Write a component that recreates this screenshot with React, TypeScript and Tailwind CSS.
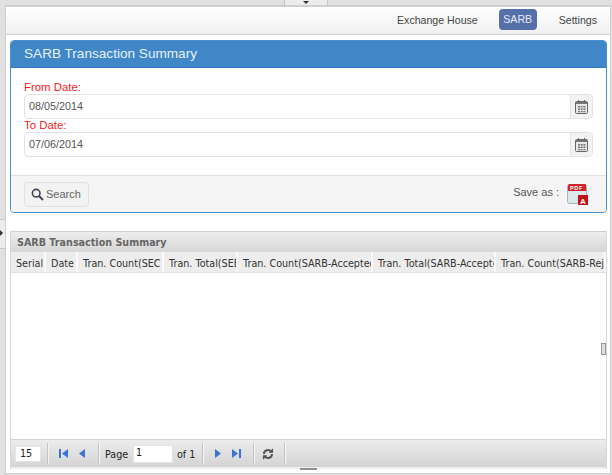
const font = "font-['Liberation_Sans',Arial,sans-serif]";
const verdana = "font-['DejaVu_Sans',Verdana,sans-serif]";

const columns = [
  { label: "Serial", width: "w-[35px]" },
  { label: "Date", width: "w-[32px]" },
  { label: "Tran. Count(SEC", width: "w-[86px]" },
  { label: "Tran. Total(SEB", width: "w-[74px]" },
  { label: "Tran. Count(SARB-Accepted", width: "w-[135px]" },
  { label: "Tran. Total(SARB-Accepted", width: "w-[123px]" },
  { label: "Tran. Count(SARB-Rejected", width: "w-[110px]" },
];

function CalendarIcon() {
  return (
    <svg width="13" height="14" viewBox="0 0 13 14">
      <rect x="0.5" y="1.5" width="12" height="12" rx="1" fill="#e8e8e8" stroke="#666" />
      <rect x="1" y="2" width="11" height="2" fill="#777" />
      <path d="M3.5 0v3M9.5 0v3" stroke="#666" />
      <path d="M3 6h2v1.5H3zM5.7 6h2v1.5h-2zM8.4 6h2v1.5h-2zM3 8.5h2V10H3zM5.7 8.5h2V10h-2zM8.4 8.5h2V10h-2zM3 11h2v1.3H3zM5.7 11h2v1.3h-2zM8.4 11h2v1.3h-2z" fill="#777" />
    </svg>
  );
}

function DateField({ label, value }: { label: string; value: string }) {
  return (
    <div>
      <div className="h-[13px] text-[11.4px] leading-[13px] text-[#f01c24]">{label}</div>
      <div className="flex h-[25px] w-[569px] rounded-[4px] border border-[#e2e2e2] bg-white">
        <div className="flex-1 pl-[4px] text-[10.8px] leading-[23px] text-[#555]">{value}</div>
        <div className="flex w-[22px] items-center justify-center rounded-r-[4px] border-l border-[#e2e2e2] bg-[#f3f3f3]">
          <CalendarIcon />
        </div>
      </div>
    </div>
  );
}

function PdfIcon() {
  return (
    <svg width="21" height="22" viewBox="0 0 21 22">
      <rect x="0.5" y="1.5" width="19" height="19" rx="2" fill="#dbe8ea" stroke="#a9b5b8" />
      <path d="M1 3a2 2 0 0 1 2-2h15a1 1 0 0 1 1 1v6H1z" fill="#d2232a" />
      <text x="9.5" y="6.5" textAnchor="middle" fontSize="5.5" fontWeight="700" fill="#fff" fontFamily="'Liberation Sans', sans-serif" letterSpacing="0.6">PDF</text>
      <rect x="11" y="12" width="10" height="10" fill="#c40f16" />
      <text x="16" y="20.5" textAnchor="middle" fontSize="8" fontWeight="700" fill="#fff" fontFamily="'Liberation Sans', sans-serif">A</text>
    </svg>
  );
}

function PagerSeparator() {
  return <div className="h-[21px] w-[2px] shrink-0 border-l border-r border-l-[#c4c4c4] border-r-[#f4f4f4]" />;
}

function NavIcon({ d }: { d: string }) {
  return (
    <svg width="10" height="11" viewBox="0 0 10 11" className="shrink-0">
      <path d={d} fill="#3b74d6" />
    </svg>
  );
}

export default function App() {
  return (
    <div className={`${font} relative h-[475px] w-[612px] overflow-hidden bg-[#e0e0e0]`}>
      {/* top tab and left splitter handle */}
      <div className="absolute left-[284px] top-0 h-[5px] w-[44px] border-x border-[#c4c4c4] bg-[#ececec]">
        <div className="mx-auto mt-[1px] h-0 w-0 border-x-[3px] border-t-[3px] border-x-transparent border-t-[#333]" />
      </div>
      <div className="absolute left-0 top-[219px] h-[30px] w-[5px] border-y border-[#c8c8c8] bg-[#ececec]">
        <div className="mt-[10px] h-0 w-0 border-y-[3px] border-l-[3px] border-y-transparent border-l-[#333]" />
      </div>

      <div className="ml-[5px] mr-[1px] mt-[5px] h-[469px] border border-t-2 border-[#cfcfcf] bg-white">
        {/* Navbar */}
        <div className="flex h-[28px] items-center justify-end border-b border-[#cfcfcf] bg-gradient-to-b from-white to-[#f0f0f0] pr-[13px] text-[10.6px] text-[#444]">
          <span className="mr-[21px]">Exchange House</span>
          <span className="-mt-[2px] mr-[22px] flex h-[21px] w-[38px] items-center justify-center rounded-[4px] bg-[#5570a8] text-[#e8ecf5]">SARB</span>
          <span>Settings</span>
        </div>

        {/* Summary panel */}
        <div className="ml-[4px] mt-[5px] w-[597px] overflow-hidden rounded-[4px] border border-[#4a90d0]">
          <div className="h-[27px] border-b border-[#2f7bc0] bg-[#3f87c6] pl-[13px] text-[13.6px] leading-[26px] text-[#e6eff8]">
            SARB Transaction Summary
          </div>
          <div className="flex h-[107px] flex-col bg-white pl-[13px] pt-[13px]">
            <DateField label="From Date:" value="08/05/2014" />
            <DateField label="To Date:" value="07/06/2014" />
          </div>
          <div className="flex h-[37px] items-center justify-between border-t border-[#e0e0e0] bg-[#f5f5f5] pl-[13px] pr-[18px]">
            <button className="flex h-[25px] w-[65px] items-center gap-[2px] rounded-[4px] border border-[#e0e0e0] bg-[#f3f3f3] pl-[6px] text-[11px] text-[#666]">
              <svg width="13" height="13" viewBox="0 0 13 13" fill="none" stroke="#445" strokeWidth="1.6">
                <circle cx="5.2" cy="5.2" r="3.8" />
                <path d="M8 8l4 4" strokeWidth="2" />
              </svg>
              Search
            </button>
            <div className="flex items-center gap-[8px] text-[11px] text-[#555]">
              <span className="-mt-[4px]">Save as :</span>
              <PdfIcon />
            </div>
          </div>
        </div>

        {/* Grid */}
        <div className="relative ml-[4px] mt-[18px] h-[238px] w-[597px] border-x border-[#d8d8d8]">
          <div className={`${verdana} flex h-[21px] items-center border-t border-[#d0d0d0] bg-gradient-to-b from-[#ededed] to-[#d6d6d6] pl-[6px] pt-[2px] text-[9.6px] font-bold text-[#666]`}>
            SARB Transaction Summary
          </div>
          <div className={`${verdana} flex h-[21px] overflow-hidden border-b border-[#e2e2e2] bg-[#ededed] text-[9.6px] text-[#333]`}>
            {columns.map((col) => (
              <div key={col.label} className={`${col.width} shrink-0 overflow-hidden whitespace-nowrap border-r-2 border-[#fafafa] pl-[5px] leading-[23px]`}>
                {col.label}
              </div>
            ))}
          </div>
          <div className="h-[166px] bg-white" />
          <div className="absolute right-0 top-[112px] h-[12px] w-[5px] border border-[#999] bg-[#ddd]" />

          {/* Pager */}
          <div className={`${verdana} flex h-[28px] items-center border-t border-[#d4d4d4] bg-gradient-to-b from-[#ececec] to-[#d4d4d4] text-[9.6px] text-[#222]`}>
            <div className="ml-[4px] h-[16px] w-[26px] border border-[#e4e4e4] bg-white pl-[4px] leading-[14px]">15</div>
            <div className="ml-[6px]"><PagerSeparator /></div>
            <div className="ml-[10px] flex items-center gap-[8px]">
              <NavIcon d="M0 1h2v9H0zM9 1v9L3 5.5z" />
              <NavIcon d="M8 1v9L2 5.5z" />
            </div>
            <div className="ml-[11px]"><PagerSeparator /></div>
            <span className="ml-[5px] mt-[4px] w-[23px] whitespace-nowrap">Page</span>
            <div className="ml-[5px] h-[18px] w-[40px] border border-[#e4e4e4] bg-white pl-[2px] leading-[14px]">1</div>
            <span className="ml-[4px] mt-[4px] w-[20px] whitespace-nowrap">of 1</span>
            <div className="ml-[5px]"><PagerSeparator /></div>
            <div className="ml-[9px] flex items-center gap-[9px]">
              <NavIcon d="M2 1v9l6-4.5z" />
              <NavIcon d="M0 1v9l6-4.5zM7 1h2v9H7z" />
            </div>
            <div className="ml-[11px]"><PagerSeparator /></div>
            <svg className="ml-[7px] shrink-0" width="12" height="12" viewBox="0 0 12 12" fill="none" stroke="#555" strokeWidth="2">
              <path d="M2 6a4 4 0 0 1 7-2.6M10 6a4 4 0 0 1-7 2.6" />
              <path d="M10.5 0.8v3.4H7.2M1.5 11.2V7.8h3.3" strokeWidth="1.2" fill="#555" />
            </svg>
            <div className="ml-[10px]"><PagerSeparator /></div>
          </div>
          <div className="h-[2px] bg-[#efefef]" />
        </div>
      </div>
      <div className="absolute left-[300px] top-[468px] h-[2px] w-[17px] bg-[#909090]" />
    </div>
  );
}
